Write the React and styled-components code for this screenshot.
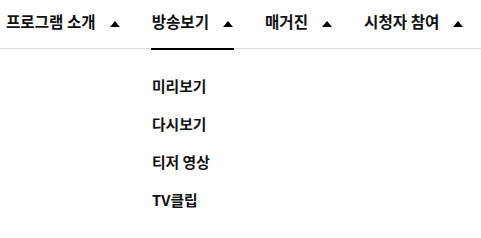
import React from "react";
import styled, { createGlobalStyle } from "styled-components";

const GlobalStyle = createGlobalStyle`
  body {
    margin: 0;
    background: #fff;
    font-family: "Noto Sans CJK KR", "Noto Sans", sans-serif;
    color: #111;
  }
`;

const tabs = [
  { label: "프로그램 소개" },
  { label: "방송보기", active: true },
  { label: "매거진" },
  { label: "시청자 참여" },
];

const menu = ["미리보기", "다시보기", "티저 영상", "TV클립"];

const App = () => {
  return (
    <Page>
      <GlobalStyle />
      <Nav>
        {tabs.map((tab) => (
          <Tab key={tab.label} $active={tab.active}>
            <Label>{tab.label}</Label>
            <Caret />
          </Tab>
        ))}
      </Nav>
      <Menu>
        {menu.map((item) => (
          <MenuItem key={item}>{item}</MenuItem>
        ))}
      </Menu>
    </Page>
  );
};

//Styled Components
const Page = styled.div`
  display: flex;
  flex-direction: column;
  min-height: 238px;
`;

const Nav = styled.nav`
  display: flex;
  align-items: stretch;
  gap: 31px;
  height: 48px;
  padding-left: 6px;
  border-bottom: 1px solid #dedede;
`;

const Tab = styled.div`
  position: relative;
  display: flex;
  align-items: center;
  padding-right: 1px;
  padding-bottom: 4px;
  box-sizing: border-box;
  &::after {
    content: "";
    display: ${(p) => (p.$active ? "block" : "none")};
    position: absolute;
    left: -1px;
    right: 0;
    bottom: -2px;
    height: 2px;
    background: #000;
  }
`;

const Label = styled.span`
  font-size: 15.6px;
  font-weight: 700;
  line-height: 1;
  white-space: nowrap;
`;

const Caret = styled.span`
  margin-left: 14px;
  margin-top: 3px;
  width: 0;
  height: 0;
  border-left: 5.5px solid transparent;
  border-right: 5.5px solid transparent;
  border-bottom: 6px solid #000;
`;

const Menu = styled.ul`
  display: flex;
  flex-direction: column;
  margin: 0;
  padding: 18px 0 0 152px;
  list-style: none;
`;

const MenuItem = styled.li`
  height: 38px;
  line-height: 38px;
  font-size: 14.8px;
  font-weight: 700;
  white-space: nowrap;
`;

export default App;
